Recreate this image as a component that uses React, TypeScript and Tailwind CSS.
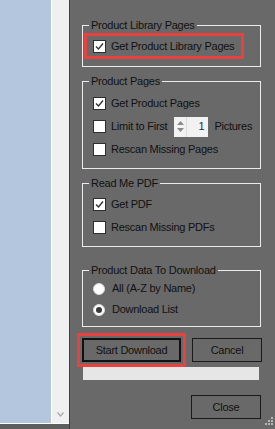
import React from 'react';

const Check: React.FC<{ checked?: boolean }> = ({ checked }) => (
  <span className="flex h-[13px] w-[13px] shrink-0 items-center justify-center border border-[#2e2e2e] bg-white">
    {checked && (
      <svg width="11" height="11" viewBox="0 0 11 11">
        <path d="M2 5.5 L4.5 8 L9 2.5" fill="none" stroke="#333" strokeWidth="1.4" />
      </svg>
    )}
  </span>
);

const Radio: React.FC<{ checked?: boolean }> = ({ checked }) => (
  <span className="flex h-[12px] w-[12px] shrink-0 items-center justify-center rounded-full border border-[#d8d8d8] bg-white">
    {checked && <span className="h-[6px] w-[6px] rounded-full bg-[#3a3a3a]" />}
  </span>
);

const Row: React.FC<{ h: string; children: React.ReactNode }> = ({ h, children }) => (
  <div className={`flex items-center pl-[9px] ${h}`}>{children}</div>
);

const Group: React.FC<{ title: string; className: string; children: React.ReactNode }> = ({ title, className, children }) => (
  <fieldset className={`ml-[5px] w-[179px] border border-[#ececec] px-[1px] ${className}`}>
    <legend className="ml-[5px] px-[2px] leading-[13px]">{title}</legend>
    {children}
  </fieldset>
);

const Spinner: React.FC = () => (
  <div className="ml-[7px] flex h-[20px] w-[34px] bg-[#f2f2f2]">
    <div className="flex w-[13px] flex-col items-center justify-center gap-[3px] border-r border-[#dcdcdc]">
      <svg width="7" height="4" viewBox="0 0 7 4">
        <path d="M0 4 L3.5 0 L7 4 Z" fill="#8a8a8a" />
      </svg>
      <svg width="7" height="4" viewBox="0 0 7 4">
        <path d="M0 0 L3.5 4 L7 0 Z" fill="#8a8a8a" />
      </svg>
    </div>
    <div className="flex flex-1 items-center justify-end pr-[4px] text-[#2a2a2a]">1</div>
  </div>
);

export default function App() {
  return (
    <div className="flex h-[429px] w-[275px] overflow-hidden font-['Liberation_Sans',Arial,sans-serif] text-[11px] tracking-[-0.25px] text-[#111]">
      <div className="flex flex-col">
        <div className="flex flex-1">
          <div className="w-[52px] border-r border-white bg-[#b3c6de]" />
          <div className="flex w-[17px] flex-col items-center justify-end bg-[#f0f0f0] pb-[6px]">
            <svg width="7" height="5" viewBox="0 0 7 5">
              <path d="M0.5 0.5 L3.5 4 L6.5 0.5" fill="none" stroke="#a8a8a8" strokeWidth="1.2" />
            </svg>
          </div>
        </div>
        <div className="h-[1px] bg-white" />
        <div className="h-[5px] bg-[#5e5e5e]" />
      </div>
      <div className="w-[1px] bg-[#3e3e3e]" />

      <div className="relative flex flex-1 flex-col bg-[#696969] pl-[7px] pt-[19px]">
        <Group title="Product Library Pages" className="">
          <div className="mb-[7px] mt-[1px] flex h-[26px] w-[160px] items-center border-[3px] border-[#e8423f] pl-[6px]">
            <Check checked />
            <span className="ml-[5px]">Get Product Library Pages</span>
          </div>
        </Group>

        <Group title="Product Pages" className="mt-[8px]">
          <div className="pb-[7px] pt-[4px]">
            <Row h="h-[23px]">
              <Check checked />
              <span className="ml-[5px]">Get Product Pages</span>
            </Row>
            <Row h="h-[23px]">
              <Check />
              <span className="ml-[5px]">Limit to First</span>
              <Spinner />
              <span className="ml-[6px]">Pictures</span>
            </Row>
            <Row h="h-[23px]">
              <Check />
              <span className="ml-[5px]">Rescan Missing Pages</span>
            </Row>
          </div>
        </Group>

        <Group title="Read Me PDF" className="mt-[8px]">
          <div className="pb-[7px] pt-[3px]">
            <Row h="h-[23px]">
              <Check checked />
              <span className="ml-[5px]">Get PDF</span>
            </Row>
            <Row h="h-[23px]">
              <Check />
              <span className="ml-[5px]">Rescan Missing PDFs</span>
            </Row>
          </div>
        </Group>

        <Group title="Product Data To Download" className="mt-[17px]">
          <div className="pb-[6px] pt-[1px]">
            <Row h="h-[21px]">
              <Radio />
              <span className="ml-[7px]">All (A-Z by Name)</span>
            </Row>
            <Row h="h-[21px]">
              <Radio checked />
              <span className="ml-[7px]">Download List</span>
            </Row>
          </div>
        </Group>

        <div className="mt-[6px] flex items-center">
          <div className="border-[3px] border-[#e8423f] p-[2px]">
            <button className="flex h-[24px] w-[99px] items-center justify-center border-2 border-[#111]">
              Start Download
            </button>
          </div>
          <button className="ml-[6px] flex h-[24px] w-[70px] items-center justify-center border border-[#1a1a1a]">
            Cancel
          </button>
        </div>

        <div className="ml-[6px] h-[13px] w-[176px] bg-[#e6e6e6]" />

        <button className="ml-[114px] mt-[15px] flex h-[24px] w-[70px] items-center justify-center border border-[#1a1a1a]">
          Close
        </button>

        <svg className="absolute bottom-[4px] right-[2px]" width="8" height="8" viewBox="0 0 8 8">
          <rect x="6" y="0" width="2" height="2" fill="#b5b5b5" />
          <rect x="3" y="3" width="2" height="2" fill="#b5b5b5" />
          <rect x="6" y="3" width="2" height="2" fill="#b5b5b5" />
          <rect x="0" y="6" width="2" height="2" fill="#b5b5b5" />
          <rect x="3" y="6" width="2" height="2" fill="#b5b5b5" />
          <rect x="6" y="6" width="2" height="2" fill="#b5b5b5" />
        </svg>
      </div>
    </div>
  );
}
